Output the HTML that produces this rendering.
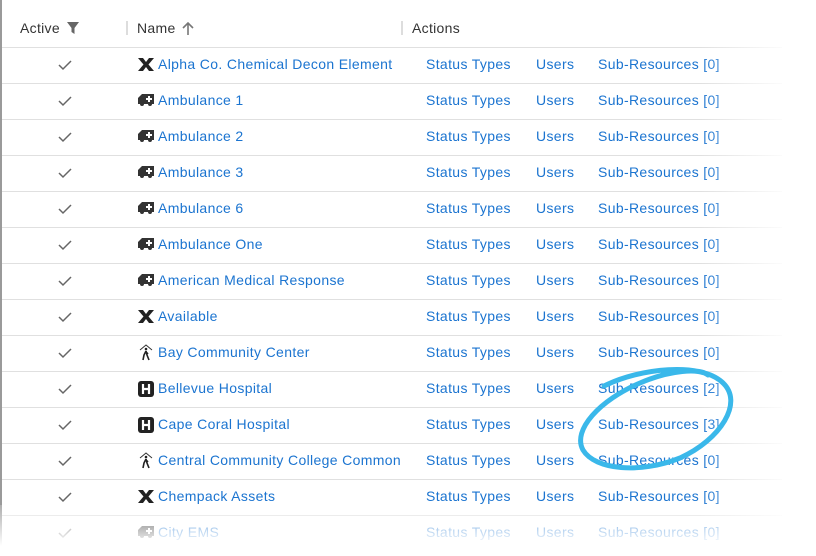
<!DOCTYPE html>
<html><head><meta charset="utf-8"><style>
body{margin:0;width:816px;height:556px;background:#fff;font-family:"Liberation Sans",sans-serif;overflow:hidden;position:relative}
.lb{position:absolute;left:0;top:0;width:2px;height:556px;background:#9a9a9a}
.hdr{position:absolute;top:10px;height:36px;left:0;width:790px;font-size:14px;color:#333}
.hdr span{position:absolute;top:10px;letter-spacing:0.3px}
.sep{position:absolute;top:11px;width:2px;height:14px;background:#ddd}
.row{position:absolute;left:2px;width:780px;height:36px;border-top:1px solid #e0e0e0;font-size:14px;color:#1b74d0}
.row span{position:absolute;top:8px;letter-spacing:0.35px}
.ck{position:absolute;left:55px;top:10px}
.ic{position:absolute;left:135px;top:4px}
.fade{position:absolute;left:0;top:505px;width:816px;height:51px;background:linear-gradient(rgba(255,255,255,0.2),#fff 80%)}
.rf{position:absolute;left:700px;top:0;width:116px;height:556px;background:linear-gradient(90deg,rgba(255,255,255,0),#fff 80%)}
</style></head><body>
<div class="lb"></div>
<div class="hdr">
<span style="left:20px">Active</span>
<svg style="position:absolute;left:67px;top:12px" width="12" height="12" viewBox="0 0 12 12"><path d="M0 0H12L7.5 6V12L4.5 10V6Z" fill="#666"/></svg>
<div class="sep" style="left:126px"></div>
<span style="left:137px">Name</span>
<svg style="position:absolute;left:182px;top:12px" width="12" height="13" viewBox="0 0 12 13"><path d="M6 1V13M1 6L6 1L11 6" stroke="#777" stroke-width="1.6" fill="none"/></svg>
<div class="sep" style="left:401px"></div>
<span style="left:412px">Actions</span>
</div>
<div id="rows"></div>
<script>
var X='<svg width="18" height="16" viewBox="0 0 18 16"><path d="M1 2H6L9 6L12 2H17L11.5 8.5L17 15H12L9 11L6 15H1L6.5 8.5Z" fill="#222"/></svg>';
var A='<svg width="18" height="16" viewBox="0 0 18 16"><path d="M1 6L5 2H17V12H15A2 2 0 0 1 11 12H7A2 2 0 0 1 3 12H1Z" fill="#333"/><path d="M12 4V10M9 7H15" stroke="#fff" stroke-width="2"/></svg>';
var H='<svg width="18" height="18" viewBox="0 0 18 18"><rect x="1" y="1" width="16" height="16" rx="3" fill="#222"/><path d="M6 4V14M12 4V14M6 9H12" stroke="#fff" stroke-width="2.2"/></svg>';
var W='<svg width="18" height="18" viewBox="0 0 18 18"><path d="M3 6L9 1L15 6" stroke="#333" stroke-width="1" fill="none"/><circle cx="9" cy="5" r="1.3" fill="#222"/><path d="M9 7L7 11L6 16M9 7L10 11L12 16M9 8L11 10" stroke="#222" stroke-width="1.6" fill="none"/></svg>';
var d=[[X,'Alpha Co. Chemical Decon Element',0],[A,'Ambulance 1',0],[A,'Ambulance 2',0],[A,'Ambulance 3',0],[A,'Ambulance 6',0],[A,'Ambulance One',0],[A,'American Medical Response',0],[X,'Available',0],[W,'Bay Community Center',0],[H,'Bellevue Hospital',2],[H,'Cape Coral Hospital',3],[W,'Central Community College Common',0],[X,'Chempack Assets',0],[A,'City EMS',0]];
var h='';
d.forEach(function(r,i){
h+='<div class="row" style="top:'+(47+i*36)+'px"><svg class="ck" width="16" height="14" viewBox="0 0 16 14"><path d="M2 7L6 11L14 3" stroke="#666" stroke-width="1.5" fill="none"/></svg><span class="ic">'+r[0]+'</span><span style="left:156px">'+r[1]+'</span><span style="left:424px">Status Types</span><span style="left:534px">Users</span><span style="left:596px">Sub-Resources ['+r[2]+']</span></div>';
});
document.getElementById('rows').innerHTML=h;
</script>
<div class="rf"></div>
<div class="fade"></div>
<svg style="position:absolute;left:0;top:0" width="816" height="556"><path d="M604 386C640 368 700 362 722 382C745 402 720 440 680 458C640 474 595 470 583 450C572 430 600 400 640 383C670 370 700 368 708 375" stroke="#3ab8ea" stroke-width="5" fill="none" stroke-linecap="round"/></svg>
</body></html>
